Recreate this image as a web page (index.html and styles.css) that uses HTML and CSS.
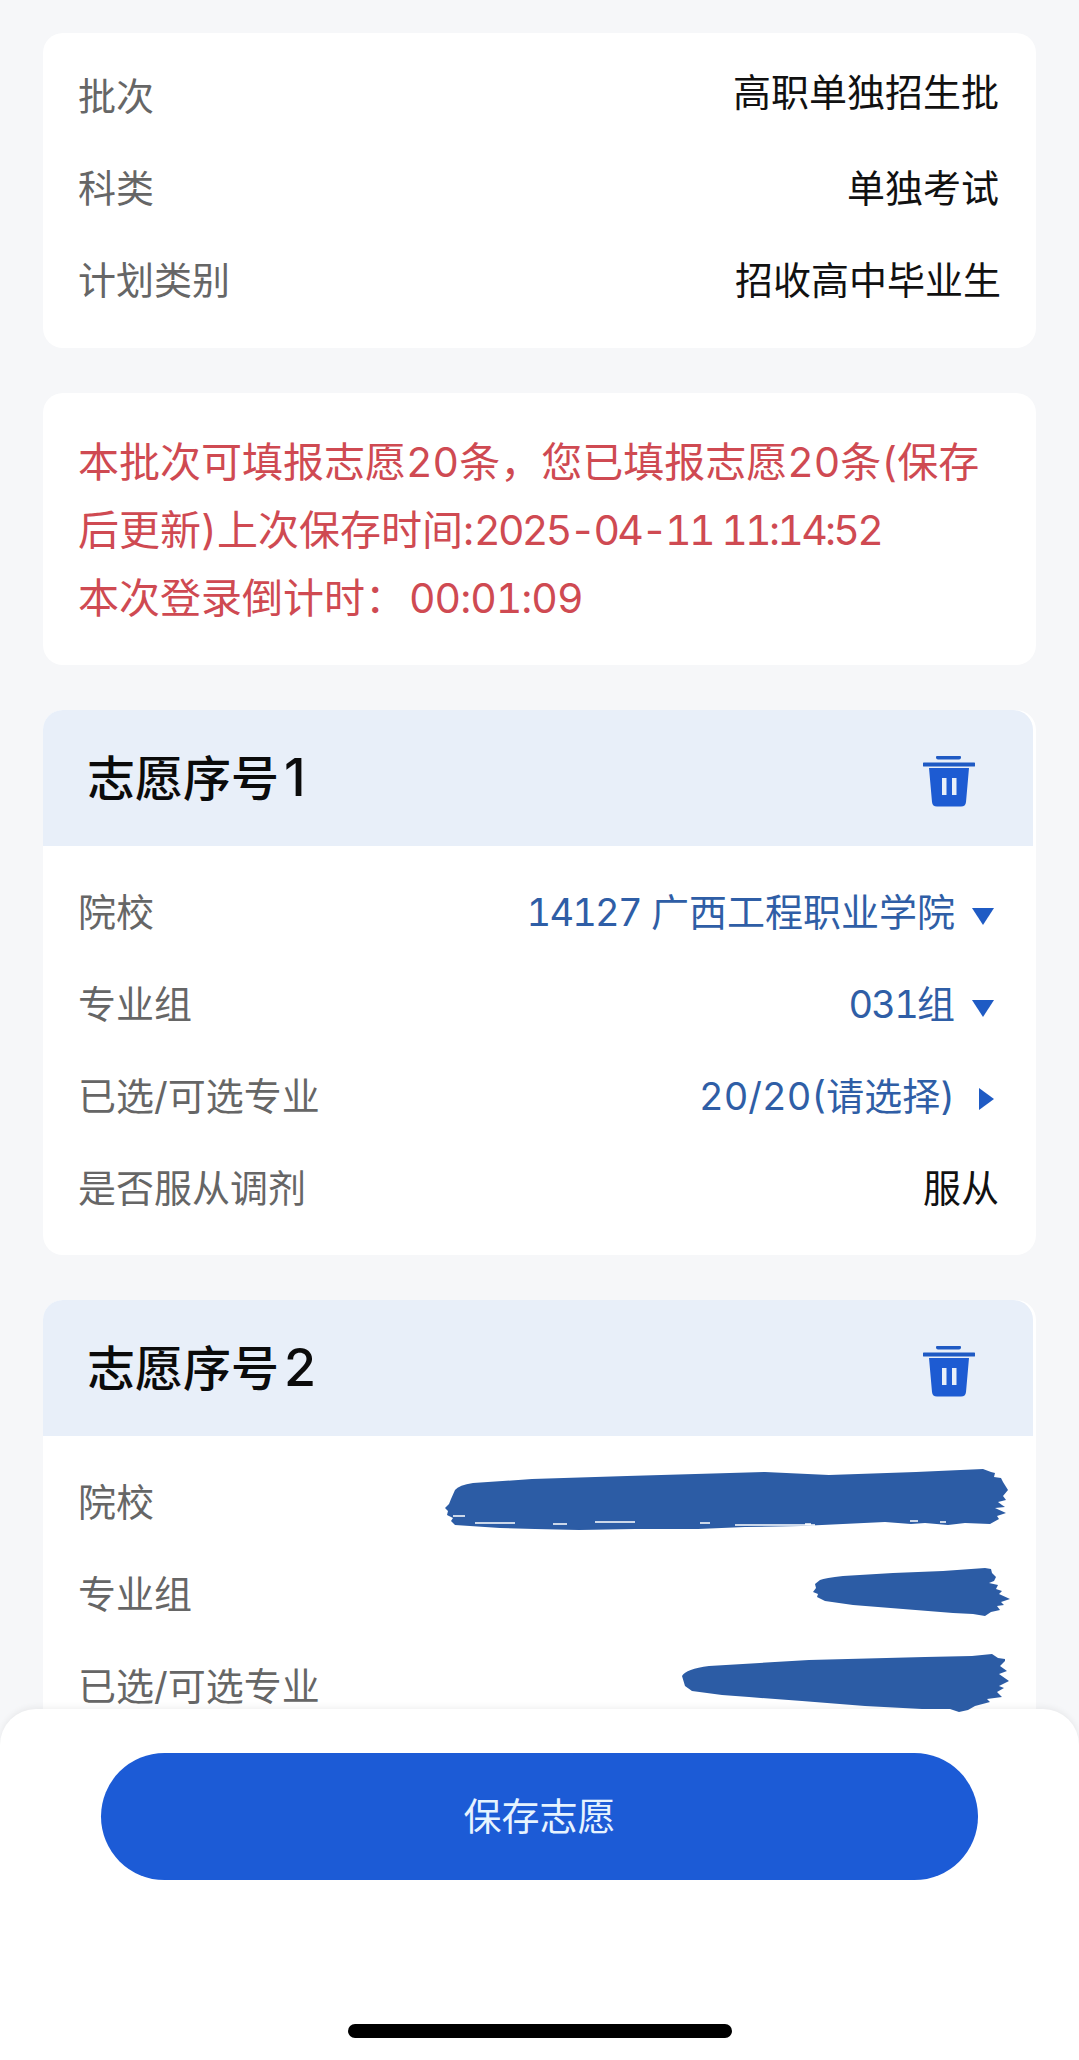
FILE: index.html
```html
<!DOCTYPE html>
<html lang="zh-CN">
<head>
<meta charset="utf-8">
<title>志愿填报</title>
<link rel="stylesheet" href="styles.css">
</head>
<body>
<div class="page">
  <main class="content">
    <section class="card info">
      <div class="row"><span class="label">批次</span><span class="value raised">高职单独招生批</span></div>
      <div class="row"><span class="label">科类</span><span class="value">单独考试</span></div>
      <div class="row"><span class="label">计划类别</span><span class="value nudged">招收高中毕业生</span></div>
    </section>

    <section class="card notice">
      本批次可填报志愿20条，您已填报志愿20条(保存<br>
      后更新)上次保存时间:<span class="date">2025-04-11 11:14:52</span><br>
      本次登录倒计时：<span class="timer">00:01:09</span>
    </section>

    <section class="card wish">
      <header class="wish-head">
        <h2 class="wish-title">志愿序号<span class="title-num">1</span></h2>
        <svg class="trash" viewBox="0 0 52 51"><path d="M15 1.500h21" class="t-line"/><path d="M1 8.500h50" class="t-line"/><path d="M6 12h40l-3 34a5 5 0 0 1-5 4.500h-24a5 5 0 0 1-5-4.500z" class="t-body"/><path d="M19 22h4.500v17h-4.500zM29 22h4.500v17h-4.500z" class="t-slot"/></svg>
      </header>
      <div class="wish-body">
        <div class="row"><span class="label">院校</span><span class="pick"><span><span class="code">14127</span> 广西工程职业学院</span><svg class="caret" viewBox="0 0 22 17"><path d="M0 0h22L11 17z"/></svg></span></div>
        <div class="row"><span class="label">专业组</span><span class="pick"><span><span class="code">031</span>组</span><svg class="caret" viewBox="0 0 22 17"><path d="M0 0h22L11 17z"/></svg></span></div>
        <div class="row"><span class="label">已选/可选专业</span><span class="pick">20/20(请选择)<svg class="caret caret-right" viewBox="0 0 22 22"><path d="M7 0l15 11L7 22z"/></svg></span></div>
        <div class="row"><span class="label">是否服从调剂</span><span class="value">服从</span></div>
      </div>
    </section>

    <section class="card wish">
      <header class="wish-head">
        <h2 class="wish-title">志愿序号<span class="title-num">2</span></h2>
        <svg class="trash" viewBox="0 0 52 51"><path d="M15 1.500h21" class="t-line"/><path d="M1 8.500h50" class="t-line"/><path d="M6 12h40l-3 34a5 5 0 0 1-5 4.500h-24a5 5 0 0 1-5-4.500z" class="t-body"/><path d="M19 22h4.500v17h-4.500zM29 22h4.500v17h-4.500z" class="t-slot"/></svg>
      </header>
      <div class="wish-body">
        <div class="row"><span class="label">院校</span>
          <svg class="brush brush-a" viewBox="0 0 563 61"><path d="M10 21Q14 16 28 14L87 10 182 7 320 3 384 6 471 3 538 0 546 3 550 4 549 8 556 9 558 13 563 21 558 27 561 31 553 33 557 36 560 38 550 39 561 44 552 47 554 50 545 55 520 54 503 56 480 54 466 55 440 53 356 57 300 58 253 60 190 60 134 61 90 60 55 59 25 57 10 56 6 52 8 49 2 46 3 42 0 39 4 35 6 30z"/><path class="brush-gap" d="M8 47h12M108 55h14M150 53h40M255 54h10M290 56h80M30 54h40M360 55h6M465 52h8M495 53h6"/></svg>
        </div>
        <div class="row"><span class="label">专业组</span>
          <svg class="brush brush-b" viewBox="0 0 197 48"><path d="M7 12Q12 10 30 8L80 5 130 3 172 0 178 1 179 5 183 9 181 13 176 15 185 17 183 21 189 23 186 26 197 31 188 34 191 37 184 38 187 42 178 44 172 48 160 46 140 45 90 41 40 37 12 33 4 29 5 26 0 24 3 20 2 16z"/></svg>
        </div>
        <div class="row"><span class="label">已选/可选专业</span>
          <svg class="brush brush-c" viewBox="0 0 327 60"><path d="M0 22Q4 15 27 12L127 6 243 3 290 2 310 0 316 4 323 5 323 7 318 12 325 17 317 20 327 27 317 32 322 34 315 38 320 43 305 45 308 48 293 52 286 56 277 58 268 55 240 55 183 52 120 47 67 43 40 41 10 37 3 32z"/></svg>
        </div>
      </div>
    </section>
  </main>

  <footer class="footer">
    <button class="save" type="button">保存志愿</button>
    <div class="home-bar"></div>
  </footer>
</div>
</body>
</html>
```

FILE: styles.css
```css
* { box-sizing: border-box; }

html, body {
  margin: 0;
  padding: 0;
}

body {
  background: #f6f7f9;
  font-family: "Inter", "Noto Sans CJK SC", sans-serif;
  font-variant-numeric: tabular-nums;
}

.page {
  position: relative;
  width: 1079px;
  height: 2060px;
  overflow: hidden;
}

.content {
  display: flex;
  flex-direction: column;
  gap: 45px;
  padding: 33px 43px 0;
}

.card {
  background: #fff;
  border-radius: 20px;
}

.info {
  padding: 17px 0 22px;
}

.row {
  display: flex;
  align-items: center;
  justify-content: space-between;
  height: 92px;
  padding: 0 37px 5px 35px;
  font-size: 38px;
}

.label { color: #666; }
.value { color: #111; }
.raised { margin-bottom: 8px; }
.nudged { margin-right: -2px; }

.notice {
  height: 272px;
  padding: 35px 20px 0 35px;
  color: #cf4a52;
  font-size: 41px;
  line-height: 68px;
  white-space: nowrap;
}

.date { letter-spacing: -2.700px; }

.timer {
  margin-left: 3px;
  letter-spacing: -1px;
}

.wish-head {
  display: flex;
  align-items: center;
  justify-content: space-between;
  height: 136px;
  margin-right: 3px;
  padding: 0 58px 0 44px;
  background: #e8eff9;
  border-radius: 20px 20px 0 0;
}

.wish-title {
  margin: 0;
  color: #0b0b0b;
  font-size: 48px;
  font-weight: 500;
  line-height: 1;
}

.title-num {
  margin-left: 5px;
  font-size: 52px;
  font-variant-numeric: proportional-nums;
}

.trash {
  width: 52px;
  height: 51px;
  margin-top: 6px;
}

.t-line {
  fill: none;
  stroke: #1f5ac4;
  stroke-width: 4;
  stroke-linecap: round;
}

.t-body { fill: #1d5bd2; }
.t-slot { fill: #e8eff9; }

.wish-body {
  padding: 20px 0 21px;
}

.pick {
  display: flex;
  align-items: center;
  gap: 17px;
  margin-right: 5px;
  color: #2f5ea6;
}

.code { letter-spacing: -1.800px; }

.caret {
  width: 22px;
  height: 17px;
  margin-top: 13px;
  fill: #1f5bc4;
}

.caret-right {
  height: 22px;
  margin-top: 10px;
}

.brush {
  position: relative;
  z-index: 3;
  flex: none;
  fill: #2c5ca5;
}

.brush-a { width: 563px; height: 61px; margin-right: -9px; }
.brush-b { width: 197px; height: 48px; margin-right: -11px; }
.brush-c { width: 327px; height: 60px; margin-right: -10px; }

.brush-gap {
  fill: none;
  stroke: #fff;
  stroke-width: 1.500;
}

.footer {
  position: absolute;
  z-index: 2;
  left: 0;
  right: 0;
  bottom: 0;
  display: flex;
  flex-direction: column;
  align-items: center;
  height: 351px;
  padding-top: 44px;
  background: #fff;
  border-radius: 36px 36px 0 0;
  box-shadow: 0 -2px 6px rgba(0, 0, 0, 0.06);
}

.save {
  width: 877px;
  height: 127px;
  padding: 0 0 6px;
  border: 0;
  border-radius: 64px;
  background: #1c5bd6;
  color: #e6f3ff;
  font-family: inherit;
  font-size: 38px;
}

.home-bar {
  width: 384px;
  height: 14px;
  margin-top: 144px;
  border-radius: 7px;
  background: #000;
}
```
